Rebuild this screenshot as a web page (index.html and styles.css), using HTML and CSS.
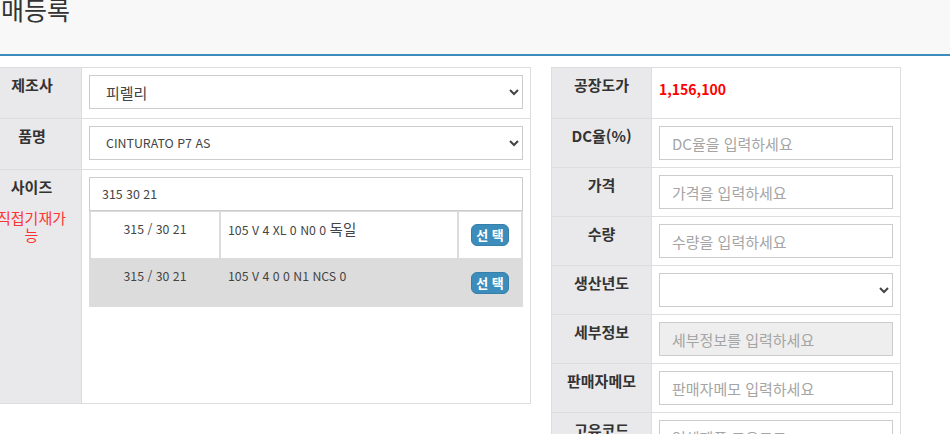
FILE: index.html
```html
<!DOCTYPE html>
<html lang="ko">
<head>
<meta charset="utf-8">
<title>매등록</title>
<link rel="stylesheet" href="styles.css">
</head>
<body>
<header class="page-header">
  <h1 class="page-title">매등록</h1>
</header>
<main class="content">
  <section class="form-grid form-left">
    <div class="label">제조사</div>
    <div class="field"><select class="control control-ko"><option>피렐리</option></select></div>
    <div class="label">품명</div>
    <div class="field"><select class="control control-en"><option>CINTURATO P7 AS</option></select></div>
    <div class="label label-wide">사이즈<p class="hint">직접기재가능</p></div>
    <div class="field">
      <input class="control control-en" type="text" value="315 30 21">
      <div class="results">
        <div class="result-row first">
          <div class="cell size">315 / 30 21</div>
          <div class="cell spec">105 V 4 XL 0 N0 0 <span class="ko">독일</span></div>
          <div class="cell action"><button class="btn" type="button">선 택</button></div>
        </div>
        <div class="result-row second">
          <div class="cell size">315 / 30 21</div>
          <div class="cell spec">105 V 4 0 0 N1 NCS 0</div>
          <div class="cell action"><button class="btn" type="button">선 택</button></div>
        </div>
      </div>
    </div>
  </section>
  <section class="form-grid form-right">
    <div class="label">공장도가</div>
    <div class="field"><p class="price">1,156,100</p></div>
    <div class="label">DC율(%)</div>
    <div class="field"><input class="control" type="text" placeholder="DC율을 입력하세요"></div>
    <div class="label">가격</div>
    <div class="field"><input class="control" type="text" placeholder="가격을 입력하세요"></div>
    <div class="label">수량</div>
    <div class="field"><input class="control" type="text" placeholder="수량을 입력하세요"></div>
    <div class="label">생산년도</div>
    <div class="field"><select class="control control-ko"><option></option></select></div>
    <div class="label">세부정보</div>
    <div class="field"><input class="control" type="text" placeholder="세부정보를 입력하세요" disabled></div>
    <div class="label">판매자메모</div>
    <div class="field"><input class="control" type="text" placeholder="판매자메모 입력하세요"></div>
    <div class="label">고유코드</div>
    <div class="field"><input class="control" type="text" placeholder="업체제품 고유코드"></div>
  </section>
</main>
</body>
</html>
```
FILE: styles.css
```css
* { box-sizing: border-box; }
html, body { margin: 0; padding: 0; }
body {
  font-family: "Noto Sans CJK KR", "Noto Sans", sans-serif;
  color: #333;
  background: #fff;
  overflow: hidden;
  height: 434px;
}
.page-header {
  display: flow-root;
  background: #f8f8f8;
  height: 56px;
  border-bottom: 2px solid #3c8dbc;
  padding-left: 1px;
}
.page-title {
  margin: -9px 0 0;
  font-size: 25px;
  line-height: 36px;
  font-weight: 400;
  color: #333;
}
.content {
  display: flex;
  align-items: flex-start;
  gap: 20px;
  margin-top: 11px;
  margin-left: -18px;
}
.form-grid {
  display: grid;
  border-top: 1px solid #ddd;
  border-left: 1px solid #ddd;
}
.form-left {
  grid-template-columns: 99px 449px;
  grid-template-rows: 51px 51px 234px;
}
.form-right {
  grid-template-columns: 100px 249px;
  grid-template-rows: 51px repeat(7, 49px);
}
.label, .field {
  border-right: 1px solid #ddd;
  border-bottom: 1px solid #ddd;
}
.label {
  background: #e9e9eb;
  font-size: 15px;
  font-weight: 700;
  line-height: 20px;
  text-align: center;
  padding: 7px 8px;
}
.label-wide {
  padding-left: 12px;
  padding-right: 13px;
}
.hint {
  margin: 12px 0 0;
  font-weight: 400;
  line-height: 17px;
  color: #ff3333;
}
.field {
  padding: 7px;
}
.control {
  display: block;
  width: 100%;
  height: 34px;
  border: 1px solid #ccc;
  border-radius: 0;
  background-color: #fff;
  padding: 0 12px;
  font-family: inherit;
  font-size: 15px;
  color: #444;
}
.control-ko { font-size: 15px; }
.control-en { font-size: 12.4px; }
.control::placeholder { color: #a5a5a5; font-size: 15px; }
.control:disabled { background-color: #eee; }
.price {
  margin: 4px 0 0;
  font-size: 14px;
  font-weight: 700;
  line-height: 20px;
  color: #ff0000;
}
.results {
  background: #dcdcdc;
  padding: 1px 2px 0;
}
.result-row {
  display: grid;
  grid-template-columns: 128px 236px 62px;
  column-gap: 2px;
}
.result-row.first { height: 46px; }
.result-row.second { height: 49px; }
.result-row.first .cell { background: #fff; }
.cell {
  font-size: 12.3px;
  line-height: 20px;
  color: #444;
  padding-top: 7px;
}
.cell .ko { font-size: 14.5px; }
.result-row.second .cell { padding-top: 8px; }
.cell.size { text-align: center; }
.cell.spec { padding-left: 7px; }
.result-row .cell.action {
  padding: 0;
  display: flex;
  align-items: center;
  justify-content: center;
}
.btn {
  width: 38px;
  height: 22px;
  padding: 0;
  border: 1px solid #367fa9;
  border-radius: 6px;
  background: #3c8dbc;
  color: #fff;
  font-family: inherit;
  font-size: 13px;
  font-weight: 700;
  line-height: 20px;
}
```
